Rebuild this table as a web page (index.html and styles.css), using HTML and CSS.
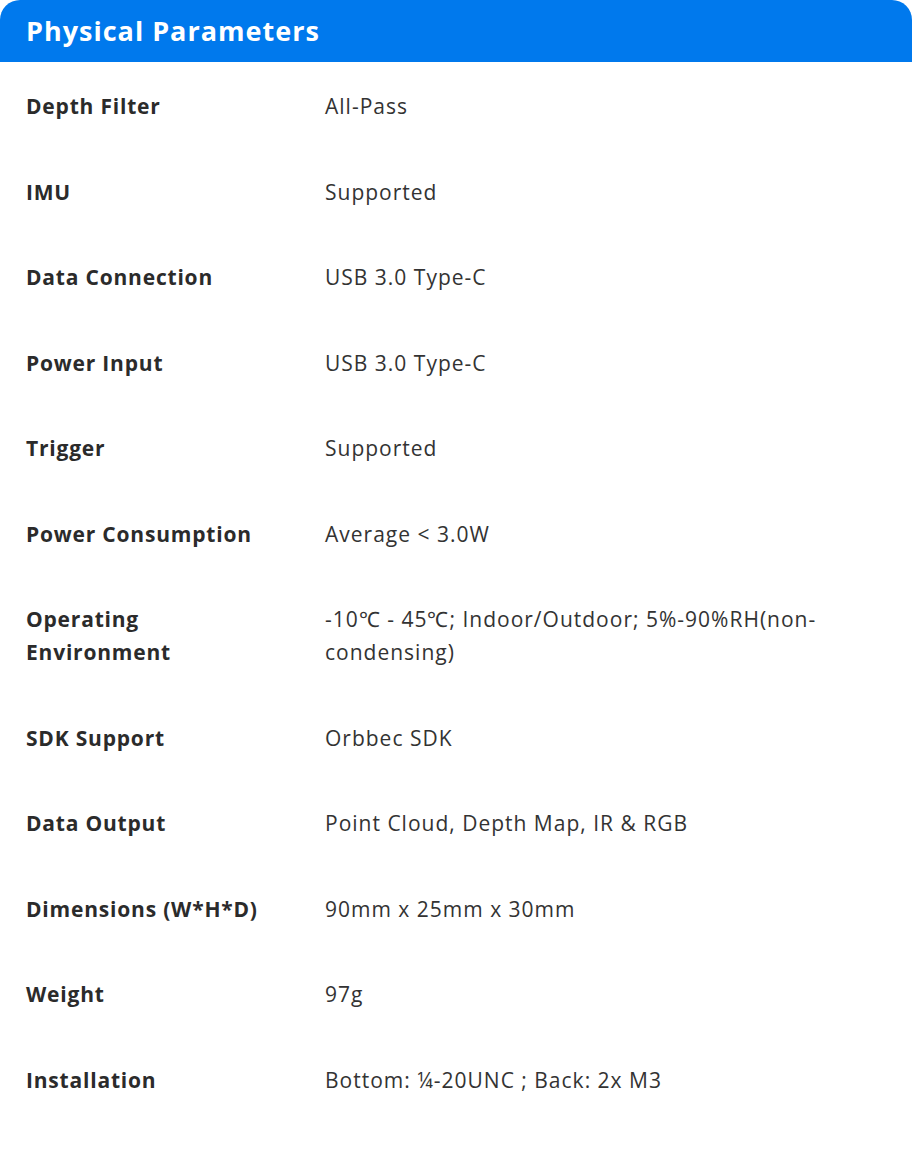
FILE: index.html
```html
<!DOCTYPE html>
<html lang="en">
<head>
<meta charset="utf-8">
<title>Physical Parameters</title>
<link rel="stylesheet" href="styles.css">
</head>
<body>
<section class="card">
  <h2 class="card-title">Physical Parameters</h2>
  <div class="rows">
    <div class="row"><div class="label">Depth Filter</div><div class="value">All-Pass</div></div>
    <div class="row"><div class="label">IMU</div><div class="value">Supported</div></div>
    <div class="row"><div class="label">Data Connection</div><div class="value">USB 3.0 Type-C</div></div>
    <div class="row"><div class="label">Power Input</div><div class="value">USB 3.0 Type-C</div></div>
    <div class="row"><div class="label">Trigger</div><div class="value">Supported</div></div>
    <div class="row"><div class="label">Power Consumption</div><div class="value">Average &lt; 3.0W</div></div>
    <div class="row"><div class="label">Operating Environment</div><div class="value">-10℃ - 45℃; Indoor/Outdoor; 5%-90%RH(non-condensing)</div></div>
    <div class="row"><div class="label">SDK Support</div><div class="value">Orbbec SDK</div></div>
    <div class="row"><div class="label">Data Output</div><div class="value">Point Cloud, Depth Map, IR &amp; RGB</div></div>
    <div class="row"><div class="label">Dimensions (W*H*D)</div><div class="value">90mm x 25mm x 30mm</div></div>
    <div class="row"><div class="label">Weight</div><div class="value">97g</div></div>
    <div class="row"><div class="label">Installation</div><div class="value">Bottom: ¼-20UNC ; Back: 2x M3</div></div>
  </div>
</section>
</body>
</html>
```
FILE: styles.css
```css
html, body {
  margin: 0;
  padding: 0;
  background: #ffffff;
}
body {
  font-family: "Open Sans", "Liberation Sans", sans-serif;
  color: #333333;
}
.card {
  width: 912px;
}
.card-title {
  margin: 0;
  height: 62px;
  box-sizing: border-box;
  padding: 0 26px 2px;
  display: flex;
  align-items: center;
  background: #0079ed;
  color: #ffffff;
  font-size: 27px;
  font-weight: 700;
  letter-spacing: 1px;
  border-radius: 20px 20px 0 0;
}
.rows {
  display: flex;
  flex-direction: column;
  padding: 2px 26px 0;
}
.row {
  display: flex;
  padding: 26px 0 26.5px;
  font-size: 21px;
  line-height: 33px;
}
.label {
  width: 299px;
  flex: none;
  box-sizing: border-box;
  padding-right: 45px;
  font-weight: 700;
  letter-spacing: 0.8px;
  color: #2b2b2b;
}
.value {
  flex: 1;
  font-weight: 400;
  letter-spacing: 1px;
  color: #333333;
}
```
